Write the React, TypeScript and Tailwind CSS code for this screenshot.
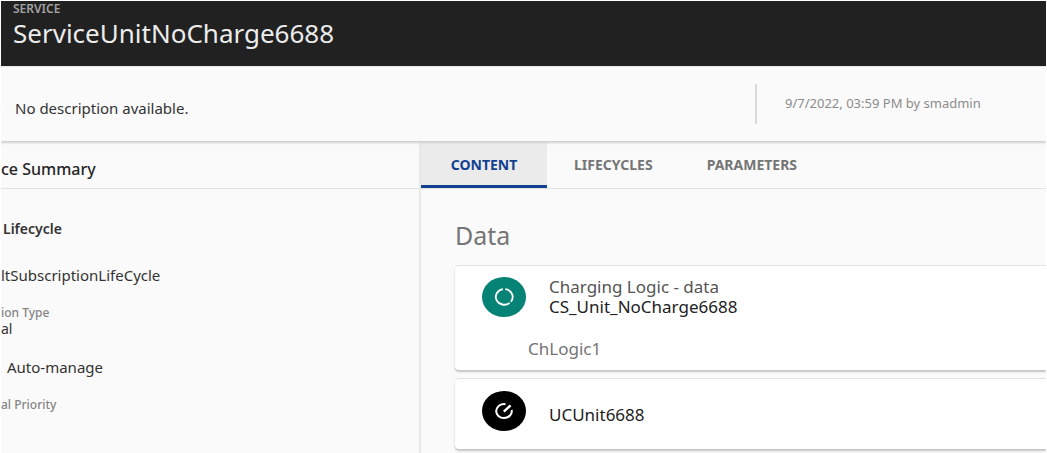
import React from "react";

const tabs = ["CONTENT", "LIFECYCLES", "PARAMETERS"];

function LogicIcon() {
  return (
    <svg viewBox="0 0 44 40" className="h-10 w-11 shrink-0" aria-hidden="true">
      <ellipse cx="22" cy="20" rx="22" ry="20" fill="#068374" />
      <g fill="none" stroke="#fff" strokeWidth="1.8">
        <path d="M23.3 12.2A8.4 7.8 0 0 1 28.9 24.7" />
        <path d="M27.6 25.9A8.4 7.8 0 1 1 20.9 12.2" />
      </g>
    </svg>
  );
}

function UnitIcon() {
  return (
    <svg viewBox="0 0 44 40" className="h-10 w-11 shrink-0" aria-hidden="true">
      <ellipse cx="22" cy="20" rx="22" ry="20" fill="#000" />
      <g fill="none" stroke="#fff" strokeWidth="2">
        <path d="M23.5 13.2A7.8 7 0 1 0 29.7 19" />
        <path d="M21.8 20.6L28.6 14.4" strokeWidth="2.4" />
      </g>
    </svg>
  );
}

export default function App() {
  return (
    <div className="flex min-h-screen flex-col overflow-hidden border-x border-t border-white bg-[#fafafa] font-['Noto_Sans',sans-serif] text-[#333]">
      <header className="h-[65px] bg-[#212121] px-3">
        <p className="text-xs leading-4 font-semibold text-[#a3a3a3]">SERVICE</p>
        <h1 className="text-[26px] leading-8 text-[#ececec]">ServiceUnitNoCharge6688</h1>
      </header>

      <section className="z-10 flex h-[75px] items-center border-t border-[#e8e8e8] bg-[#fafafa] shadow-[0_2px_2px_#cfcfcf]">
        <p className="flex-1 pt-2 pl-[14px] text-[15px]">No description available.</p>
        <div className="flex h-10 w-[291px] items-center border-l-2 border-[#dadada] pl-7">
          <p className="text-[13px] text-[#8c8c8c]">9/7/2022, 03:59 PM by smadmin</p>
        </div>
      </section>

      <div className="flex flex-1">
        <aside className="w-[420px] shrink-0 border-r-2 border-[#e8e8e8] text-[15px]">
          <h2 className="h-12 border-b border-[#e2e2e2] pt-4 text-base leading-6 font-medium text-[#262626]">
            ce Summary
          </h2>
          <h3 className="pt-7 pl-0.5 text-sm leading-6 font-semibold">Lifecycle</h3>
          <p className="pt-6 leading-5">ltSubscriptionLifeCycle</p>
          <dl className="pt-5">
            <dt className="text-xs leading-4 font-medium text-[#858585]">ion Type</dt>
            <dd className="text-sm leading-4">al</dd>
          </dl>
          <p className="pt-5 pl-1.5 leading-5">Auto-manage</p>
          <p className="pt-5 text-xs leading-4 font-medium text-[#858585]">al Priority</p>
        </aside>

        <main className="min-w-0 flex-1">
          <nav className="flex h-12 border-b border-[#e2e2e2]">
            {tabs.map((tab, i) => (
              <button
                key={tab}
                type="button"
                className={
                  i === 0
                    ? "h-[47px] w-[126px] border-b-3 border-[#124191] bg-[#ebebeb] pt-[3px] text-sm font-bold text-[#124191]"
                    : "h-[47px] px-[27px] text-sm font-bold text-[#757575]"
                }
              >
                {tab}
              </button>
            ))}
          </nav>

          <section className="pl-[34px]">
            <h2 className="pt-7 pb-3 text-[25px] leading-9 text-[#757575]">Data</h2>
            <div className="flex flex-col gap-2">
              <article className="h-[105px] rounded-l-sm border-t border-[#e2e2e2] bg-white pt-[11px] shadow-[0_2px_2px_#c4c4c4]">
                <div className="flex gap-[23px] pl-[27px]">
                  <LogicIcon />
                  <div className="text-[17px] leading-5">
                    <p className="text-[#555]">Charging Logic - data</p>
                    <p className="text-[#222]">CS_Unit_NoCharge6688</p>
                  </div>
                </div>
                <p className="pt-5 pl-[73px] text-[17px] leading-6 text-[#757575]">ChLogic1</p>
              </article>
              <article className="flex h-[71px] gap-[23px] rounded-l-sm border-t border-[#e2e2e2] bg-white pt-3 pl-[27px] shadow-[0_2px_2px_#c4c4c4]">
                <UnitIcon />
                <p className="pt-3 text-[17px] leading-6 text-[#222]">UCUnit6688</p>
              </article>
            </div>
          </section>
        </main>
      </div>
    </div>
  );
}
